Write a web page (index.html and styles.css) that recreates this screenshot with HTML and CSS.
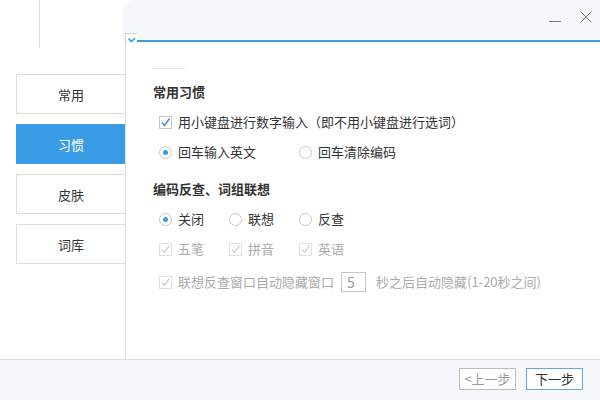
FILE: index.html
```html
<!DOCTYPE html>
<html lang="zh-CN">
<head>
  <meta charset="UTF-8" />
  <meta name="viewport" content="width=device-width, initial-scale=1.0"/>
  <title>输入法设置向导</title>
  <link rel="stylesheet" href="styles.css">
</head>
<body>
  <div class="window">
    <!-- 标题栏 -->
    <header class="titlebar">
      <div class="corner"><span class="corner-line"></span></div>
      <div class="caption">
        <div class="caption-bar">
          <button class="win-btn" title="最小化">
            <svg width="12" height="12" viewBox="0 0 12 12"><line x1="0" y1="10.5" x2="12" y2="10.5" stroke="#7a7a7a" stroke-width="1"/></svg>
          </button>
          <button class="win-btn" title="关闭">
            <svg width="12" height="12" viewBox="0 0 12 12"><path d="M0.5 0.5 L11.5 11.5 M11.5 0.5 L0.5 11.5" stroke="#7a7a7a" stroke-width="1" fill="none"/></svg>
          </button>
        </div>
        <div class="caption-line"></div>
      </div>
      <span class="drop-mark">
        <svg width="10" height="8" viewBox="0 0 10 8"><path d="M1.5 2.5 L4.5 5.5 L8 2" stroke="#3a9be6" stroke-width="1.6" fill="none"/></svg>
      </span>
    </header>

    <div class="body">
      <!-- 左侧导航 -->
      <nav class="tabs">
        <a class="tab" href="#">常用</a>
        <a class="tab active" href="#">习惯</a>
        <a class="tab" href="#">皮肤</a>
        <a class="tab" href="#">词库</a>
      </nav>

      <!-- 设置内容 -->
      <main class="panel">
        <div class="stub"></div>

        <section class="group">
          <h3 class="group-title">常用习惯</h3>
          <div class="row">
            <label class="opt">
              <span class="check on"><svg width="11" height="11" viewBox="0 0 11 11"><path d="M2 5.5 L4.5 8.5 L9.5 1.5" stroke="#3a8ee6" stroke-width="1.5" fill="none"/></svg></span>
              用小键盘进行数字输入（即不用小键盘进行选词）
            </label>
          </div>
          <div class="row">
            <label class="opt wide"><span class="radio on"></span>回车输入英文</label>
            <label class="opt"><span class="radio"></span>回车清除编码</label>
          </div>
        </section>

        <section class="group second">
          <h3 class="group-title">编码反查、词组联想</h3>
          <div class="row">
            <label class="opt"><span class="radio on"></span>关闭</label>
            <label class="opt"><span class="radio"></span>联想</label>
            <label class="opt"><span class="radio"></span>反查</label>
          </div>
          <div class="row disabled">
            <label class="opt"><span class="check"><svg width="11" height="11" viewBox="0 0 11 11"><path d="M2 5.5 L4.5 8.5 L9.5 1.5" stroke="#d2d2d2" stroke-width="1.3" fill="none"/></svg></span>五笔</label>
            <label class="opt"><span class="check"><svg width="11" height="11" viewBox="0 0 11 11"><path d="M2 5.5 L4.5 8.5 L9.5 1.5" stroke="#d2d2d2" stroke-width="1.3" fill="none"/></svg></span>拼音</label>
            <label class="opt"><span class="check"><svg width="11" height="11" viewBox="0 0 11 11"><path d="M2 5.5 L4.5 8.5 L9.5 1.5" stroke="#d2d2d2" stroke-width="1.3" fill="none"/></svg></span>英语</label>
          </div>
          <div class="row disabled last">
            <label class="opt"><span class="check"><svg width="11" height="11" viewBox="0 0 11 11"><path d="M2 5.5 L4.5 8.5 L9.5 1.5" stroke="#d2d2d2" stroke-width="1.3" fill="none"/></svg></span>联想反查窗口自动隐藏窗口</label>
            <input class="sec-input" type="text" value="5" disabled>
            <span class="hint">秒之后自动隐藏(1-20秒之间)</span>
          </div>
        </section>
      </main>
    </div>

    <!-- 底部按钮 -->
    <footer class="footer">
      <button class="step prev">&lt;上一步</button>
      <button class="step next">下一步</button>
    </footer>
  </div>
</body>
</html>
```

FILE: styles.css
```css
* {
  margin: 0;
  padding: 0;
  box-sizing: border-box;
}

html, body {
  width: 100%;
  height: 100%;
  overflow: hidden;
  background: #fff;
  font-family: "Noto Sans CJK SC", "Microsoft YaHei", sans-serif;
  font-size: 13px;
  color: #333;
}

.window {
  width: 600px;
  height: 400px;
  display: flex;
  flex-direction: column;
}

/* 标题栏 */
.titlebar {
  height: 45px;
  display: flex;
  position: relative;
}

.corner {
  width: 122px;
  flex-shrink: 0;
}

.corner-line {
  display: block;
  width: 40px;
  height: 48px;
  border-right: 1px solid #dedede;
}

.caption {
  flex: 1;
}

.caption-bar {
  height: 40px;
  background: #f7f8fc;
  border-top-left-radius: 12px;
  display: flex;
  justify-content: flex-end;
  align-items: flex-start;
  gap: 19px;
  padding: 11px 8px 0 0;
}

.win-btn {
  width: 12px;
  height: 12px;
  border: none;
  background: none;
  display: block;
  cursor: pointer;
}

.win-btn svg {
  display: block;
}

.caption-line {
  height: 2px;
  margin-left: 8px;
  background: #3a9be6;
}

.drop-mark {
  position: absolute;
  left: 125px;
  top: 33px;
  width: 12px;
  height: 12px;
  border-left: 1px solid #cfcfcf;
  border-top: 1px solid #cfcfcf;
  background: #fff;
  display: flex;
  align-items: center;
  justify-content: center;
}

/* 主体 */
.body {
  flex: 1;
  display: flex;
}

.tabs {
  width: 126px;
  flex-shrink: 0;
  border-right: 1px solid #dedede;
  padding: 29px 0 0 16px;
  display: flex;
  flex-direction: column;
  gap: 10px;
}

.tab {
  height: 40px;
  display: flex;
  align-items: center;
  justify-content: center;
  border: 1px solid #dedede;
  border-right: none;
  color: #333;
  text-decoration: none;
  font-size: 13px;
}

.tab.active {
  background: #3a9be6;
  border-color: #3a9be6;
  color: #fff;
}

.panel {
  flex: 1;
  padding: 23px 0 0 27px;
}

.stub {
  width: 33px;
  height: 1px;
  margin-left: -1px;
  background: #e2e2e2;
  margin-bottom: 13px;
}

.group {
  display: flex;
  flex-direction: column;
  gap: 10px;
}

.group.second {
  margin-top: 17px;
}

.group-title {
  font-size: 13px;
  font-weight: bold;
  line-height: 20px;
  color: #333;
}

.row {
  display: flex;
  align-items: center;
  height: 20px;
  padding-left: 6px;
  line-height: 20px;
}

.row.last {
  margin-top: 3px;
}

.opt {
  display: flex;
  align-items: center;
  gap: 6px;
  min-width: 70px;
  white-space: nowrap;
}

.opt.wide {
  min-width: 140px;
}

.check,
.radio {
  width: 13px;
  height: 13px;
  flex-shrink: 0;
  display: flex;
  align-items: center;
  justify-content: center;
}

.check {
  border: 1px solid #c6c6c6;
}

.radio {
  border: 1px solid #c8c8c8;
  border-radius: 50%;
}

.radio.on::after {
  content: "";
  width: 5px;
  height: 5px;
  border-radius: 50%;
  background: #3a9be6;
}

.row.disabled {
  color: #ababab;
}

.row.disabled .check {
  border-color: #e0e0e0;
}

.sec-input {
  width: 25px;
  height: 20px;
  margin-left: 7px;
  border: 1px solid #c8c8c8;
  background: #fff;
  color: #999;
  font-family: inherit;
  font-size: 14px;
  padding-left: 5px;
}

.hint {
  margin-left: 10px;
  white-space: nowrap;
}

/* 底部 */
.footer {
  height: 41px;
  flex-shrink: 0;
  border-top: 1px solid #dedede;
  background: #f7f8fc;
  display: flex;
  justify-content: flex-end;
  align-items: flex-start;
  gap: 10px;
  padding: 8px 17px 0 0;
}

.step {
  width: 57px;
  height: 22px;
  background: #fff;
  font-family: inherit;
  font-size: 13px;
  line-height: 20px;
  cursor: pointer;
}

.step.prev {
  border: 1px solid #bdbdbd;
  color: #9a9a9a;
}

.step.next {
  border: 1px solid #62a9ea;
  color: #333;
}
```
